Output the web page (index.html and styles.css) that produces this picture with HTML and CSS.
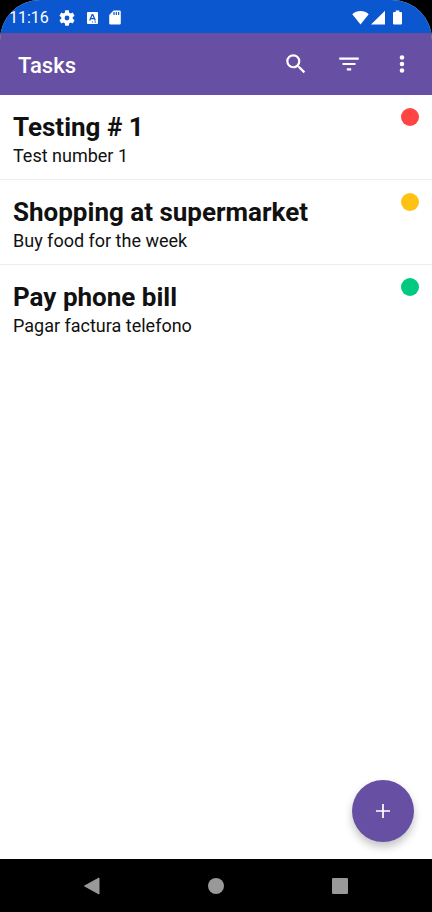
FILE: index.html
```html
<!DOCTYPE html>
<html lang="en">
<head>
<meta charset="utf-8">
<meta name="viewport" content="width=device-width, initial-scale=1">
<title>Tasks</title>
<link rel="stylesheet" href="styles.css">
</head>
<body>
<div class="screen">
  <div class="status">
    <time class="clock">11:16</time>
    <div class="notices">
      <svg width="16" height="16" viewBox="2 2 20 20"><path fill="#fff" d="M19.14 12.94c.04-.3.06-.61.06-.94 0-.32-.02-.64-.07-.94l2.03-1.58c.18-.14.23-.41.12-.61l-1.92-3.32c-.12-.22-.37-.29-.59-.22l-2.39.96c-.5-.38-1.03-.7-1.62-.94l-.36-2.54c-.04-.24-.24-.41-.48-.41h-3.84c-.24 0-.43.17-.47.41l-.36 2.54c-.59.24-1.13.57-1.62.94l-2.39-.96c-.22-.08-.47 0-.59.22L2.74 8.87c-.12.21-.08.47.12.61l2.03 1.58c-.05.3-.09.63-.09.94s.02.64.07.94l-2.03 1.58c-.18.14-.23.41-.12.61l1.920 3.320c.12.22.37.29.59.22l2.390-.96c.5.38 1.030.7 1.620.94l.36 2.540c.05.24.24.41.48.41h3.840c.24 0 .44-.17.47-.41l.36-2.540c.59-.24 1.130-.56 1.620-.94l2.390.96c.22.08.47 0 .59-.22l1.920-3.320c.12-.22.07-.47-.12-.61l-2.010-1.580zM12 15a3 3 0 1 1 0-6 3 3 0 0 1 0 6z"/></svg>
      <svg width="12" height="14" viewBox="0 0 12 14"><rect x="1" y="1" width="11" height="12" rx="1" fill="#fff"/><path d="M3.700 9.500 6.200 3.600h.6l2.500 5.900M4.600 7.600h3.800" fill="none" stroke="#0b57d0" stroke-width="1.300"/><path d="M6 11h1M8.500 11h1.500" stroke="#0b57d0"/></svg>
      <svg width="12" height="15" viewBox="0 0 12 15"><path fill="#fff" d="M4.500 .5H10.500a1.300 1.300 0 0 1 1.300 1.300v11.400a1.300 1.300 0 0 1-1.300 1.300h-9A1.300 1.300 0 0 1 .2 13.200V5z"/><path d="M5 2v3M7.300 2v3M9.600 2v3" stroke="#0b57d0" stroke-width="1.200"/></svg>
    </div>
    <div class="signals">
      <svg width="17" height="15" viewBox="0 0 17 15"><path fill="#fff" d="M8.500 14.500.3 4.200C2.500 2 5.400.9 8.500.9s6 1.100 8.200 3.300z"/></svg>
      <svg width="14" height="15" viewBox="0 0 14 15"><path fill="#fff" d="M0 14.500 14 .8v13.700z"/></svg>
      <svg class="battery" width="9" height="15" viewBox="0 0 9 15"><path fill="#fff" d="M2.700.5h3.600V2H8a1 1 0 0 1 1 1v10.500a1 1 0 0 1-1 1H1a1 1 0 0 1-1-1V3a1 1 0 0 1 1-1h1.700z"/></svg>
    </div>
  </div>
  <header class="bar">
    <h1 class="bar-title">Tasks</h1>
    <button class="action" type="button" aria-label="Search"><svg width="26" height="26" viewBox="0 0 24 24"><path fill="#fff" d="M15.500 14h-.79l-.28-.27A6.470 6.470 0 0 0 16 9.500 6.500 6.500 0 1 0 9.500 16c1.610 0 3.090-.59 4.230-1.570l.27.28v.79l5 4.990L20.490 19zm-6 0a4.500 4.500 0 1 1 0-9 4.500 4.500 0 0 1 0 9z"/></svg></button>
    <button class="action" type="button" aria-label="Filter"><svg width="26" height="26" viewBox="0 0 24 24"><path fill="#fff" d="M10 18h4v-2h-4zM3 6v2h18V6zm3 7h12v-2H6z"/></svg></button>
    <button class="action" type="button" aria-label="More"><svg width="26" height="26" viewBox="0 0 24 24"><g fill="#fff"><circle cx="12" cy="6" r="2.100"/><circle cx="12" cy="12" r="2.100"/><circle cx="12" cy="18" r="2.100"/></g></svg></button>
  </header>
  <main class="content">
    <ul class="tasks">
      <li class="task"><div class="task-text"><h2 class="name">Testing # 1</h2><p class="note">Test number 1</p></div><span class="dot high"></span></li>
      <li class="task"><div class="task-text"><h2 class="name">Shopping at supermarket</h2><p class="note">Buy food for the week</p></div><span class="dot medium"></span></li>
      <li class="task"><div class="task-text"><h2 class="name">Pay phone bill</h2><p class="note">Pagar factura telefono</p></div><span class="dot low"></span></li>
    </ul>
    <button class="fab" type="button" aria-label="Add task"><svg width="26" height="26" viewBox="0 0 24 24"><path fill="#fff" d="M18.500 12.800h-5.700v5.700h-1.600v-5.700H5.500v-1.600h5.700V5.500h1.600v5.700h5.700z"/></svg></button>
  </main>
</div>
<nav class="keys">
  <button class="key" type="button" aria-label="Back"><svg width="18" height="18" viewBox="0 0 18 18"><path fill="#999" stroke="#999" stroke-linejoin="round" d="M1.500 9 16 1v16z"/></svg></button>
  <button class="key" type="button" aria-label="Home"><svg width="18" height="18" viewBox="0 0 18 18"><circle cx="9" cy="9" r="8" fill="#999"/></svg></button>
  <button class="key" type="button" aria-label="Recents"><svg width="18" height="18" viewBox="0 0 18 18"><rect x="1" y="1" width="16" height="16" rx="1" fill="#999"/></svg></button>
</nav>
</body>
</html>
```
FILE: styles.css
```css
* { box-sizing: border-box; }
body {
  margin: 0;
  min-height: 100vh;
  display: flex;
  flex-direction: column;
  background: #000;
  color: #111;
  font-family: Roboto, "Liberation Sans", sans-serif;
}
svg { display: block; }
h1, h2, p, ul { margin: 0; padding: 0; }
button {
  display: flex;
  align-items: center;
  justify-content: center;
  padding: 0;
  border: 0;
  background: none;
}
.screen {
  flex: 1;
  display: flex;
  flex-direction: column;
  overflow: hidden;
  background: #fff;
  border-radius: 40px 40px 0 0;
}
.status {
  display: flex;
  align-items: center;
  height: 33px;
  padding: 2px 30px 0 9px;
  background: #0b57d0;
  color: #fff;
}
.clock { font-size: 16px; }
.notices {
  display: flex;
  align-items: center;
  gap: 11px;
  margin-left: 10px;
}
.signals {
  display: flex;
  gap: 2px;
  margin-left: auto;
}
.battery { margin-left: 6px; }
.bar {
  display: flex;
  align-items: center;
  height: 62px;
  padding: 0 4px 0 18px;
  background: #6750a4;
  color: #fff;
}
.bar-title {
  flex: 1;
  padding-top: 2px;
  font-size: 22px;
  font-weight: 500;
}
.action { width: 53px; height: 53px; }
.content {
  flex: 1;
  display: flex;
  flex-direction: column;
}
.tasks { list-style: none; }
.task {
  display: flex;
  justify-content: space-between;
  height: 85px;
  padding: 13px 13px 0;
  border-bottom: 1px solid #ececec;
}
.task:last-child { border-bottom: 0; }
.name {
  font-size: 26px;
  line-height: 38px;
  font-weight: 700;
}
.note {
  font-size: 18px;
  line-height: 20px;
}
.dot {
  width: 18px;
  height: 18px;
  border-radius: 50%;
}
.high { background: #ff4444; }
.medium { background: #ffc114; }
.low { background: #00c980; }
.fab {
  width: 62px;
  height: 62px;
  margin: auto 18px 17px auto;
  border-radius: 50%;
  background: #6750a4;
  box-shadow: 0 5px 9px rgba(0, 0, 0, .24);
}
.keys {
  display: flex;
  justify-content: center;
  align-items: center;
  height: 53px;
  background: #000;
}
.key { width: 124px; height: 53px; }
```
